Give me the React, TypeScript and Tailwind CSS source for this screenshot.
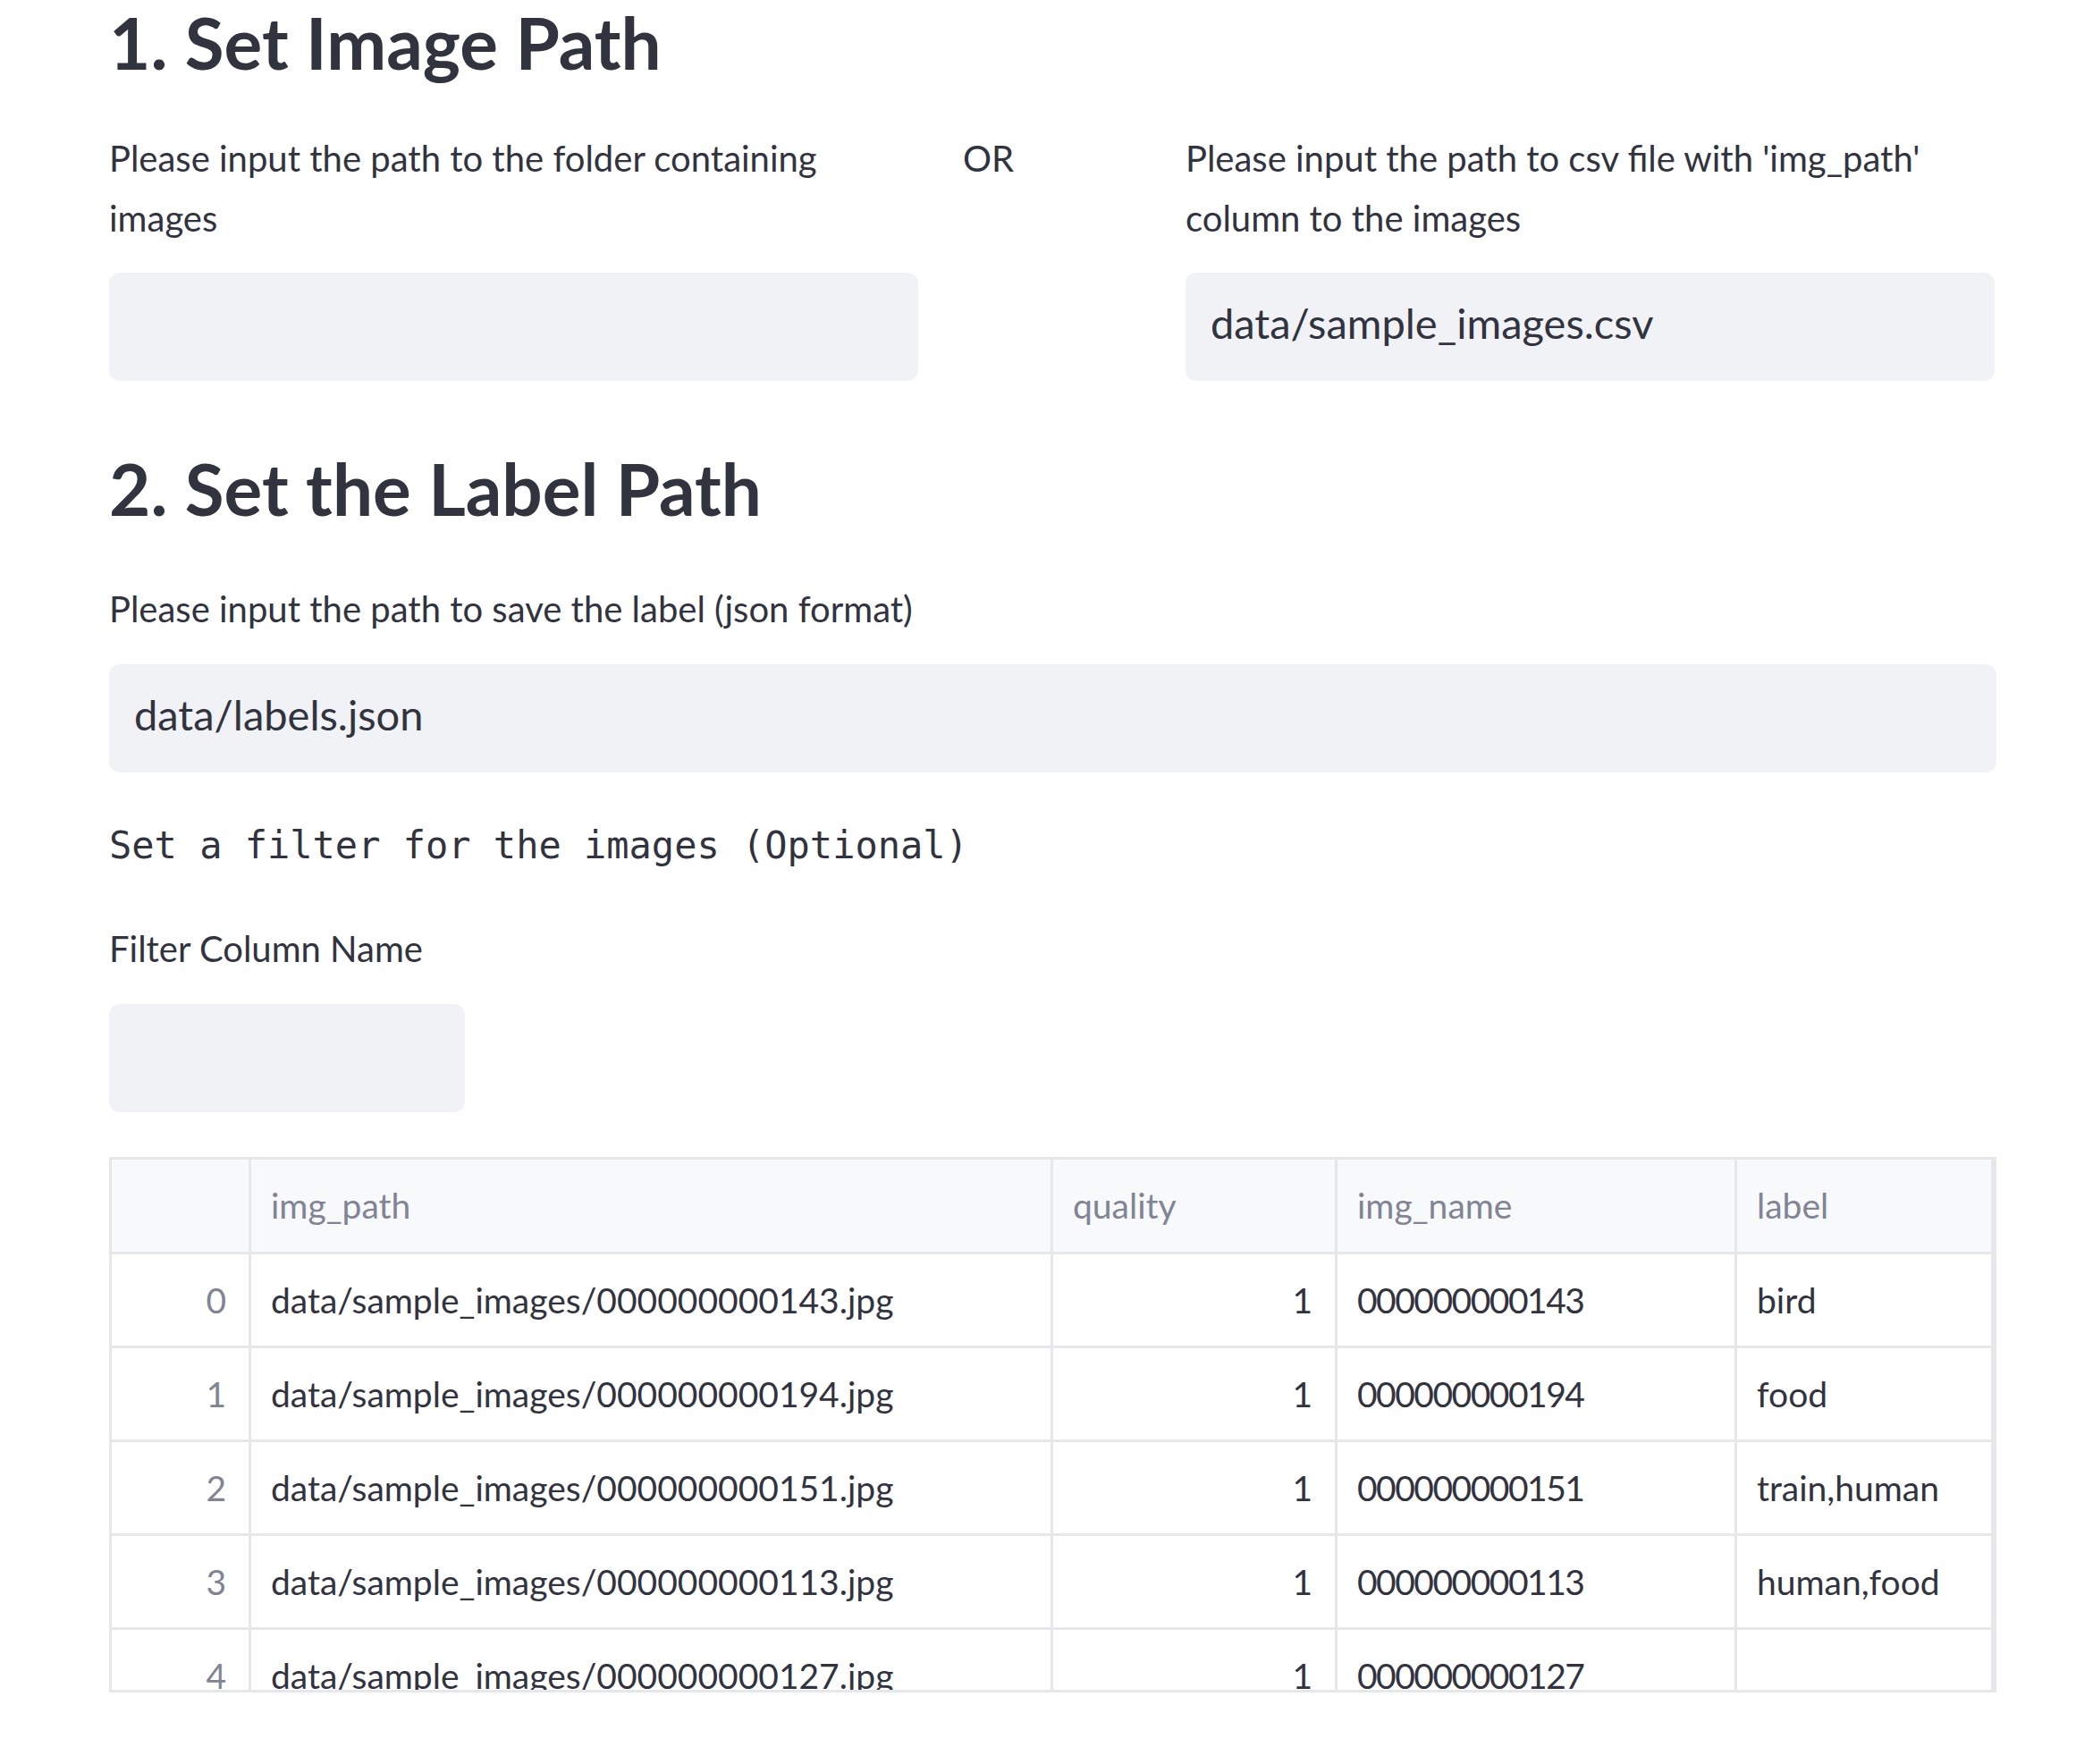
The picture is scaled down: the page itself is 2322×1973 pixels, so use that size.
const rows = [
  { idx: 0, path: "data/sample_images/000000000143.jpg", quality: 1, name: "000000000143", label: "bird" },
  { idx: 1, path: "data/sample_images/000000000194.jpg", quality: 1, name: "000000000194", label: "food" },
  { idx: 2, path: "data/sample_images/000000000151.jpg", quality: 1, name: "000000000151", label: "train,human" },
  { idx: 3, path: "data/sample_images/000000000113.jpg", quality: 1, name: "000000000113", label: "human,food" },
  { idx: 4, path: "data/sample_images/000000000127.jpg", quality: 1, name: "000000000127", label: "" },
];

const cols = "grid grid-cols-[156px_897px_318px_447px_287px]";
const cell = "flex items-center whitespace-nowrap overflow-hidden border-r-[3px] border-[#e6e7eb]";

function TextInput({ value, className = "" }: { value?: string; className?: string }) {
  return (
    <div className={`flex items-center h-[121px] rounded-xl bg-[#f0f2f6] pl-[28px] pb-2 text-[47px] text-[#31333f] ${className}`}>
      {value}
    </div>
  );
}

export default function App() {
  return (
    <main
      className="min-h-screen w-full bg-white text-[#31333f]"
      style={{ fontFamily: "Lato, 'Noto Sans', sans-serif" }}
    >
      <div className="ml-[122px] w-[2111px]">
        {/* section 1 */}
        <h3 className="text-[80px] leading-[94px] font-bold">1. Set Image Path</h3>

        <div className="mt-[50px] grid grid-cols-[905px_202px_906px] gap-x-[48px]">
          <div>
            <p className="text-[40px] leading-[67px]">
              Please input the path to the folder containing
              <br />
              images
            </p>
            <TextInput className="mt-[27px]" />
          </div>
          <div>
            <p className="text-[40px] leading-[67px] pl-[2px]">OR</p>
          </div>
          <div className="pl-[1px]">
            <p className="text-[40px] leading-[67px]">
              Please input the path to csv file with 'img_path'
              <br />
              column to the images
            </p>
            <TextInput className="mt-[27px]" value="data/sample_images.csv" />
          </div>
        </div>

        {/* section 2 */}
        <h3 className="mt-[73px] text-[80px] leading-[94px] font-bold">2. Set the Label Path</h3>
        <p className="mt-[55px] text-[40px] leading-[67px]">Please input the path to save the label (json format)</p>
        <TextInput className="mt-[28px] h-[120px]" value="data/labels.json" />

        <p
          className="mt-[48px] text-[42px] leading-[67px] whitespace-pre"
          style={{ fontFamily: "'DejaVu Sans Mono', 'Liberation Mono', monospace" }}
        >
          Set a filter for the images (Optional)
        </p>

        <p className="mt-[49px] text-[40px] leading-[67px]">Filter Column Name</p>
        <TextInput className="mt-[28px] w-[398px]" />

        {/* dataframe */}
        <div className="mt-[50px] h-[599px] overflow-hidden border-[3px] border-[#e6e7eb] text-[39px]">
          <div className={`${cols} h-[106px] bg-[#f8f9fb] border-b-[3px] border-[#e6e7eb] text-[#808495]`}>
            <div className={cell} />
            <div className={`${cell} pl-[22px]`}>img_path</div>
            <div className={`${cell} pl-[22px]`}>quality</div>
            <div className={`${cell} pl-[22px]`}>img_name</div>
            <div className={`${cell} pl-[22px] border-r-0`}>label</div>
          </div>
          {rows.map((r) => (
            <div key={r.idx} className={`${cols} h-[105px] border-b-[3px] border-[#e6e7eb]`}>
              <div className={`${cell} justify-end pr-[25px] text-[#808495]`}>{r.idx}</div>
              <div className={`${cell} pl-[22px]`}>{r.path}</div>
              <div className={`${cell} justify-end pr-[25px]`}>{r.quality}</div>
              <div className={`${cell} pl-[22px] tracking-[-1.5px]`}>{r.name}</div>
              <div className={`${cell} pl-[22px] border-r-0`}>{r.label}</div>
            </div>
          ))}
        </div>
      </div>
    </main>
  );
}
